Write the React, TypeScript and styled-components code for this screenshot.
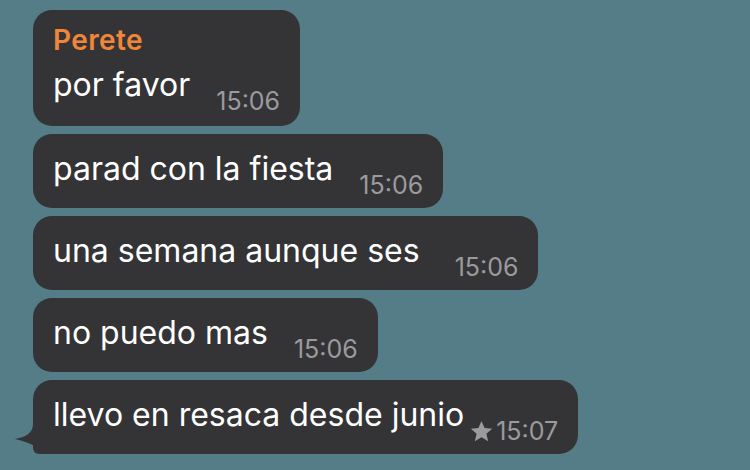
import styled, { createGlobalStyle } from "styled-components";

const GlobalStyle = createGlobalStyle`
  html, body {
    margin: 0;
    padding: 0;
    background: #557d87;
  }
  body {
    font-family: "Inter", "Noto Sans", sans-serif;
    -webkit-font-smoothing: antialiased;
  }
`;

type Msg = { text: string; time: string; name?: string; starred?: boolean; tail?: boolean };

const messages: Msg[] = [
  { name: "Perete", text: "por favor", time: "15:06" },
  { text: "parad con la fiesta", time: "15:06" },
  { text: "una semana aunque ses ", time: "15:06" },
  { text: "no puedo mas", time: "15:06" },
  { text: "llevo en resaca desde junio", time: "15:07", starred: true, tail: true },
];

export default function App() {
  return (
    <>
      <GlobalStyle />
      <Chat>
        {messages.map((m, i) => (
          <Bubble key={i} $hasName={!!m.name} $tail={m.tail}>
            {m.name && <Name>{m.name}</Name>}
            <Row>
              <Text>{m.text}</Text>
              <Time>
                {m.starred && (
                  <Star viewBox="0 0 24 24">
                    <path d="M12 1l3.2 7.4 8 .7-6.1 5.3 1.9 7.9L12 18.1l-7 4.2 1.9-7.9L.8 9.1l8-.7z" />
                  </Star>
                )}
                {m.time}
              </Time>
            </Row>
            {m.tail && (
              <Tail viewBox="0 0 36 30">
                <path d="M18 0 C18 8 12 13 0 15 C8 17 16 19 22 24 C26 28 30 30 36 30 L36 0 Z" />
              </Tail>
            )}
          </Bubble>
        ))}
      </Chat>
    </>
  );
}

const Chat = styled.div`
  display: flex;
  flex-direction: column;
  align-items: flex-start;
  gap: 8px;
  padding: 10px 0 0 33px;
  height: 470px;
  box-sizing: border-box;
  overflow: hidden;
`;

const Bubble = styled.div<{ $hasName: boolean; $tail?: boolean }>`
  position: relative;
  display: flex;
  flex-direction: column;
  background: #343436;
  border-radius: 19px;
  border-bottom-left-radius: ${(p) => (p.$tail ? "6px" : "19px")};
  padding: ${(p) => (p.$hasName ? "15px 20px 13px" : "16px 20px 11px")};
`;

const Name = styled.div`
  color: #f0863a;
  font-size: 28px;
  font-weight: 600;
  line-height: 30px;
  letter-spacing: 0.4px;
  margin-bottom: 11px;
`;

const Row = styled.div`
  display: flex;
  align-items: flex-end;
`;

const Text = styled.span`
  color: #ffffff;
  font-size: 32px;
  line-height: 38px;
  margin-bottom: 9px;
  white-space: pre;
`;

const Time = styled.span`
  display: flex;
  align-items: center;
  color: #9a9a9f;
  font-size: 25px;
  line-height: 24px;
  margin-left: 26px;
  white-space: nowrap;
`;

const Star = styled.svg`
  width: 23px;
  height: 23px;
  fill: #9a9a9f;
  margin-right: 3px;
  margin-left: -20px;
`;

const Tail = styled.svg`
  position: absolute;
  left: -18px;
  bottom: 0;
  width: 36px;
  height: 30px;
  fill: #343436;
`;
